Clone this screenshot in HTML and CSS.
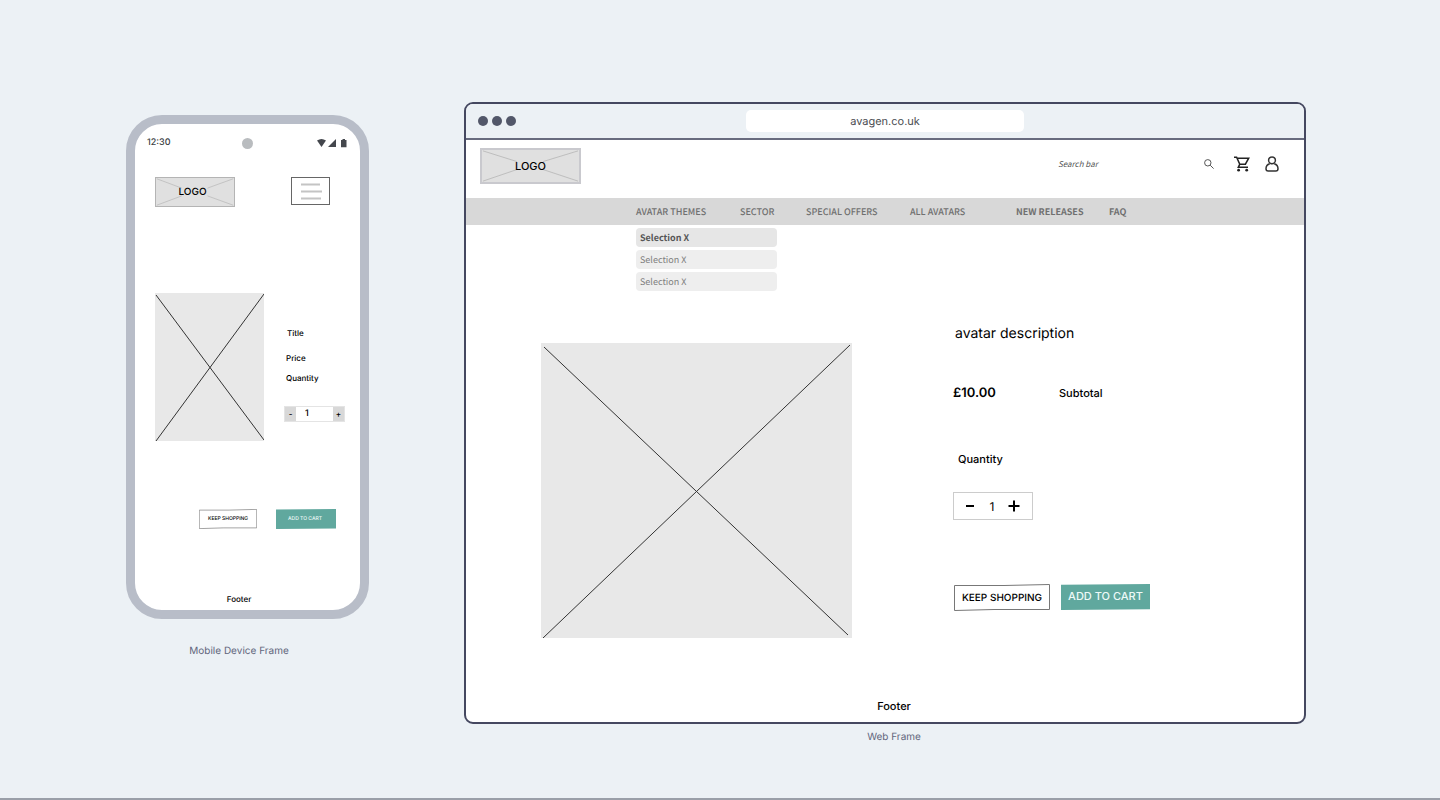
FILE: index.html
```html
<!DOCTYPE html>
<html lang="en">
<head>
<meta charset="utf-8">
<meta name="viewport" content="width=device-width, initial-scale=1">
<title>Avagen product page wireframes</title>
<link rel="stylesheet" href="styles.css">
</head>
<body>
<main class="board">
  <figure class="mobile">
    <div class="phone">
      <div class="status">
        <span class="time">12:30</span>
        <span class="camera"></span>
        <svg class="signals" viewBox="0 0 32 10" aria-hidden="true">
          <path d="M1 2.600Q5.500 -.4 10 2.600L5.500 9Z"/>
          <path d="M20 1V9H12Z"/>
          <path d="M25 2h1.500V1h2.500v1H30.500v7.200h-5.500Z"/>
        </svg>
      </div>
      <header class="phone-head">
        <div class="logo logo-small">
          <svg viewBox="0 0 100 36" preserveAspectRatio="none" aria-hidden="true"><path d="M1 1L33 13M99 1L66 13M1 35L33 23M99 35L66 23"/></svg>
          <span>LOGO</span>
        </div>
        <button class="menu" type="button" aria-label="Menu">
          <svg viewBox="0 0 22 18" aria-hidden="true"><path d="M1 2.500h19M1 9.500h21M1 16.500h20"/></svg>
        </button>
      </header>
      <section class="phone-product">
        <svg class="photo photo-small" viewBox="0 0 109 148" role="img" aria-label="Product image"><path d="M1 2L109 147M109 1L1 148"/></svg>
        <div class="phone-info">
          <p class="phone-title">Title</p>
          <p class="phone-price">Price</p>
          <label for="phone-qty">Quantity</label>
          <div class="phone-stepper">
            <button type="button" aria-label="Decrease">-</button>
            <input id="phone-qty" type="text" value="1">
            <button type="button" aria-label="Increase">+</button>
          </div>
        </div>
      </section>
      <div class="phone-actions">
        <button class="keep" type="button">
          <svg viewBox="0 0 96 27" preserveAspectRatio="none" aria-hidden="true"><path d="M.5 1.500L50 1.500L95.500 .5V25.500L40 25.500L.5 26.500Z"/></svg>
          <span>KEEP SHOPPING</span>
        </button>
        <button class="add" type="button">ADD TO CART</button>
      </div>
      <footer class="phone-footer">Footer</footer>
    </div>
    <figcaption class="caption mobile-caption">Mobile Device Frame</figcaption>
  </figure>

  <figure class="web">
    <div class="browser">
      <div class="chrome">
        <div class="dots"><span></span><span></span><span></span></div>
        <input class="url" type="text" value="avagen.co.uk" aria-label="Address">
      </div>
      <header class="site-head">
        <div class="logo">
          <svg viewBox="0 0 100 36" preserveAspectRatio="none" aria-hidden="true"><path d="M1 1L36 13M99 1L63 13M1 35L36 22M99 35L63 22"/></svg>
          <span>LOGO</span>
        </div>
        <div class="tools">
          <form class="search">
            <input type="search" placeholder="Search bar" aria-label="Search">
            <button type="submit" aria-label="Search">
              <svg viewBox="0 0 10 10" class="i-search" aria-hidden="true"><circle cx="3.800" cy="3.800" r="3.200"/><path d="M6.200 6.200L9.600 9.600"/></svg>
            </button>
          </form>
          <a href="#cart" aria-label="Cart">
            <svg viewBox="0 0 16 16" class="i-cart" aria-hidden="true"><path d="M0 1.200h2.600l3.200 7h5.600l3.300-6H3M5.800 8.200L4.300 11.300H14"/><circle cx="4.600" cy="14.200" r="1.400"/><circle cx="12.700" cy="14.200" r="1.400"/></svg>
          </a>
          <a href="#account" aria-label="Account">
            <svg viewBox="0 0 14 16" class="i-user" aria-hidden="true"><circle cx="7" cy="4.300" r="3.400"/><path d="M4.700 7.800C2.200 8.600 1 10.500 1 12.800c0 1.600.7 2.300 2.200 2.300h7.600c1.500 0 2.200-.7 2.200-2.300 0-2.300-1.200-4.200-3.700-5"/></svg>
          </a>
        </div>
      </header>
      <nav class="nav">
        <a href="#themes">AVATAR THEMES</a>
        <a href="#sector">SECTOR</a>
        <a href="#offers">SPECIAL OFFERS</a>
        <a href="#all">ALL AVATARS</a>
        <a class="strong" href="#new">NEW RELEASES</a>
        <a class="strong" href="#faq">FAQ</a>
      </nav>
      <div class="dropdown">
        <button class="active" type="button">Selection X</button>
        <button type="button">Selection X</button>
        <button type="button">Selection X</button>
      </div>
      <section class="product">
        <svg class="photo" viewBox="0 0 311 295" role="img" aria-label="Product image"><path d="M3 4L307 292M309 2L2 295"/></svg>
        <div class="details">
          <h1>avatar description</h1>
          <div class="prices"><strong>£10.00</strong><span>Subtotal</span></div>
          <label for="qty">Quantity</label>
          <div class="stepper">
            <button type="button" aria-label="Decrease"><svg viewBox="0 0 12 12" aria-hidden="true"><path d="M2 6h8"/></svg></button>
            <input id="qty" type="text" value="1">
            <button type="button" aria-label="Increase"><svg viewBox="0 0 12 12" aria-hidden="true"><path d="M.5 6h11M6 .5v11"/></svg></button>
          </div>
          <div class="actions">
            <button class="keep" type="button">
              <svg viewBox="0 0 96 27" preserveAspectRatio="none" aria-hidden="true"><path d="M.5 1.500L50 1.500L95.500 .5V25.500L40 25.500L.5 26.500Z"/></svg>
              <span>KEEP SHOPPING</span>
            </button>
            <button class="add" type="button">ADD TO CART</button>
          </div>
        </div>
      </section>
      <footer class="site-footer">Footer</footer>
    </div>
    <figcaption class="caption web-caption">Web Frame</figcaption>
  </figure>
</main>
</body>
</html>
```
FILE: styles.css
```css
* { box-sizing: border-box; }

body {
  margin: 0;
  background: #ecf1f5;
  color: #000;
  font-family: Inter, "Liberation Sans", sans-serif;
  font-size: 11px;
  font-weight: 500;
  text-rendering: geometricPrecision;
}

figure, h1, p { margin: 0; }
svg { display: block; fill: none; }
a { color: inherit; text-decoration: none; }

button, input {
  margin: 0;
  padding: 0;
  border: 0;
  background: none;
  color: inherit;
  font: inherit;
  min-width: 0;
  text-rendering: inherit;
}

.board {
  display: grid;
  grid-template-columns: 243px minmax(0, 1fr);
  gap: 95px;
  align-items: start;
  min-height: 100vh;
  padding: 102px 134px 0 126px;
  border-bottom: 2px solid #9a9fa8;
}

.caption {
  color: #62667c;
  font-size: 10px;
  font-weight: 400;
  line-height: 14px;
  text-align: center;
}

/* Placeholders */
.logo {
  display: grid;
  place-items: center;
  width: 101px;
  height: 36px;
  border: 2px solid #c9c9ce;
  background: #e0e0e0;
}
.logo > * { grid-area: 1 / 1; }
.logo svg { width: 100%; height: 100%; stroke: #bbb; }
.logo-small { width: 80px; height: 30px; font-size: 10px; border: 1px solid #b4b4b4; }
.logo-small span { padding-right: 5px; }

.photo {
  width: 311px;
  height: auto;
  background: #e8e8e8;
  stroke: #333;
}
.photo-small { width: 109px; }

/* Shared buttons */
.keep {
  display: grid;
  place-items: center;
  width: 96px;
  height: 27px;
  font-size: 10px;
}
.keep > * { grid-area: 1 / 1; }
.keep svg { width: 100%; height: 100%; stroke: #777; fill: #fff; }
.add {
  width: 89px;
  height: 26px;
  padding-bottom: 2px;
  background: #60a89e;
  color: #eefaf8;
  clip-path: polygon(0 3%, 100% 0, 100% 97%, 0 100%);
}

/* Phone */
.mobile { padding-top: 13px; }
.phone {
  height: 504px;
  display: flex;
  flex-direction: column;
  border: 9px solid #b8bdc8;
  border-radius: 36px;
  background: #fff;
  font-size: 8px;
}
.status {
  display: grid;
  grid-template-columns: 1fr 11px 1fr;
  align-items: center;
  padding: 13px 12px 0;
  color: #3c3f45;
  font-size: 9px;
  line-height: 12px;
}
.camera { width: 11px; height: 11px; border-radius: 50%; background: #b9bcbf; }
.signals { width: 32px; height: 10px; justify-self: end; fill: #44474d; }
.phone-head {
  display: flex;
  justify-content: space-between;
  align-items: flex-start;
  padding: 28px 30px 0 20px;
}
.menu {
  display: grid;
  place-items: center;
  width: 39px;
  height: 28px;
  border: 1px solid #666;
}
.menu svg { width: 22px; height: 18px; stroke: #c4c4c4; stroke-width: 2; }
.phone-product { display: flex; gap: 20px; padding: 86px 15px 0 20px; }
.phone-info { flex: 1; line-height: 12px; }
.phone-title { padding: 34px 0 0 3px; }
.phone-price { padding: 13px 0 8px 2px; }
.phone-info label { display: block; padding-left: 2px; }
.phone-stepper {
  display: grid;
  grid-template-columns: 11px 1fr 11px;
  height: 16px;
  margin-top: 22px;
  border: 1px solid #e4e4e4;
}
.phone-stepper button { background: #d8d8d8; line-height: 14px; }
.phone-stepper input { width: 100%; padding-left: 9px; font-size: 9px; }
.phone-actions { display: flex; gap: 19px; padding: 68px 23px 0 64px; }
.phone-actions .keep { width: 58px; height: 20px; font-size: 5px; }
.phone-actions .add { width: 60px; height: 20px; padding: 0 2px 0 0; font-size: 5px; }
.phone-footer { margin-top: auto; padding: 0 17px 5px 0; line-height: 12px; text-align: center; }
.mobile-caption { padding: 25px 17px 0 0; }

/* Browser */
.browser {
  display: flex;
  flex-direction: column;
  min-height: 622px;
  border: 2px solid #454860;
  border-radius: 9px;
  overflow: hidden;
  background: #fff;
}
.chrome {
  display: grid;
  grid-template-columns: 1fr 278px 1fr;
  align-items: center;
  height: 36px;
  padding: 0 12px;
  border-bottom: 2px solid #686b7e;
  background: #ecf1f5;
}
.dots { display: flex; gap: 4px; }
.dots span { width: 10px; height: 10px; border-radius: 50%; background: #525769; }
.url {
  height: 22px;
  border-radius: 5px;
  background: #fff;
  color: #4b4d52;
  font-weight: 400;
  text-align: center;
}
.site-head {
  display: flex;
  justify-content: space-between;
  align-items: flex-start;
  height: 58px;
  padding: 8px 25px 0 14px;
}
.tools { display: flex; align-items: center; gap: 15px; height: 32px; }
.search { display: flex; align-items: center; width: 161px; }
.search input {
  flex: 1;
  color: #555;
  font-family: "Noto Sans CJK SC", "Noto Sans", sans-serif;
  font-size: 8px;
  font-style: italic;
  font-weight: 400;
}
.search input::placeholder { color: #555; opacity: 1; }
.search button { padding-right: 5px; }
.i-search { width: 10px; height: 10px; stroke: #555; }
.i-cart { width: 16px; height: 16px; stroke: #222; stroke-width: 1.500; }
.i-cart circle { fill: #222; stroke: none; }
.i-user { width: 14px; height: 16px; stroke: #333; stroke-width: 1.500; }

.nav {
  display: grid;
  grid-template-columns: 104px 66px 104px 106px 93px auto;
  align-items: center;
  height: 27px;
  padding-left: 170px;
  background: #d8d8d8;
  color: #707070;
}
.nav, .dropdown {
  font-family: "Noto Sans CJK SC", "Noto Sans", sans-serif;
  font-size: 9px;
  line-height: 14px;
}
.nav .strong { font-weight: 700; }
.dropdown {
  display: flex;
  flex-direction: column;
  gap: 3px;
  width: 141px;
  margin: 3px 0 0 170px;
}
.dropdown button {
  height: 19px;
  padding-left: 4px;
  border-radius: 4px;
  background: #eee;
  color: #808080;
  font-weight: 400;
  text-align: left;
}
.dropdown .active { background: #e6e6e6; color: #555; font-weight: 700; }

.product {
  display: flex;
  align-items: flex-end;
  gap: 101px;
  padding: 33px 0 0 75px;
}
.details { flex: 1; padding-bottom: 27px; }
.details h1 { padding-left: 2px; font-size: 14px; font-weight: 400; line-height: 20px; }
.prices {
  display: grid;
  grid-template-columns: 106px auto;
  align-items: center;
  padding-top: 39px;
  line-height: 20px;
}
.prices strong { font-size: 13px; font-weight: 600; }
.details label { display: block; padding: 49px 0 0 5px; line-height: 14px; }
.stepper {
  display: grid;
  grid-template-columns: 12px 1fr 12px;
  align-items: center;
  width: 80px;
  height: 28px;
  margin-top: 26px;
  padding: 0 12px 0 10px;
  border: 1px solid #ccc;
}
.stepper svg { width: 12px; height: 12px; stroke: #000; stroke-width: 2; }
.stepper input { width: 100%; font-size: 12px; font-weight: 400; text-align: center; }
.actions { display: flex; gap: 11px; padding: 64px 0 0 1px; }
.site-footer { margin-top: auto; padding: 0 0 8px 18px; line-height: 16px; text-align: center; }
.web-caption { padding: 6px 0 0 18px; }
```
